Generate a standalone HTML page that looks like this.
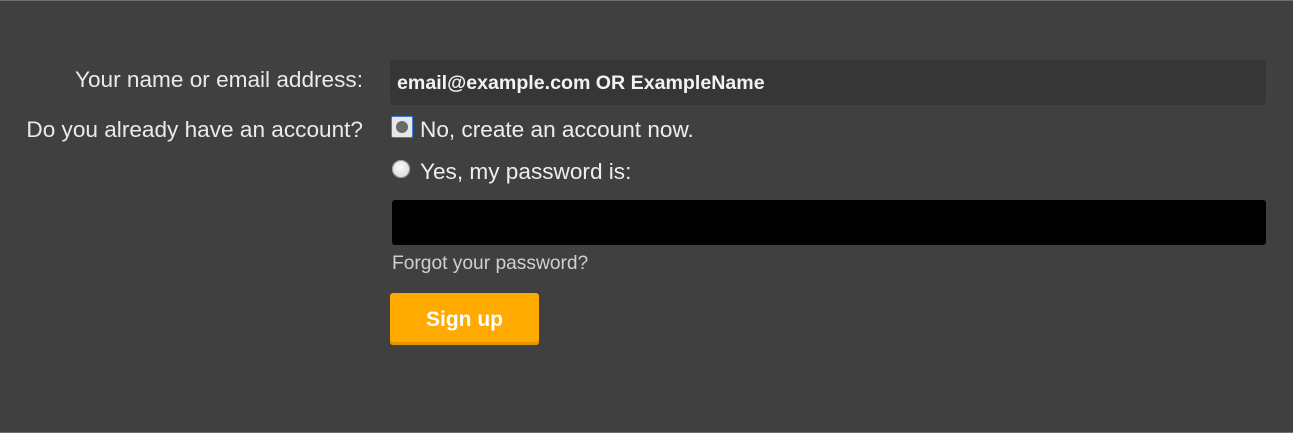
<!DOCTYPE html>
<html><head><style>
html,body{margin:0;padding:0}
body{width:1293px;height:433px;background:#404040;position:relative;overflow:hidden;font-family:"Liberation Sans",Arial,sans-serif;color:#eee}
.top{position:absolute;left:0;top:0;width:1293px;height:1px;background:#6e6e6e}
.bot{position:absolute;left:0;bottom:0;width:1293px;height:1px;background:#6e6e6e}
.lbl{position:absolute;right:930px;font-size:22.6px;color:#eaeaea;white-space:nowrap}
.in1{position:absolute;left:390px;top:60px;width:876px;height:45px;background:#363636;border-radius:3px;box-sizing:border-box;padding-left:7px;line-height:46px;font-weight:bold;font-size:19.6px;color:#f2f2f2}
.pw{position:absolute;left:392px;top:200px;width:874px;height:45px;background:#000;border-radius:3px}
.r{position:absolute;font-size:22.6px;color:#eee;white-space:nowrap}
.radio{position:absolute;width:18px;height:18px;border-radius:50%;background:radial-gradient(circle at 45% 40%,#fafafa,#cfcfcf);box-shadow:inset 0 0 0 1px #9a9a9a}
.sel{position:absolute;left:391px;top:116px;width:22px;height:22px;border:1px solid #3d7ce0;box-sizing:border-box;background:#e8e8e8;border-radius:2px}
.sel:after{content:"";position:absolute;left:4px;top:4px;width:12px;height:12px;border-radius:50%;background:#6a6a6a}
.fg{position:absolute;left:392px;top:253px;font-size:19.2px;color:#d0d0d0}
.btn{position:absolute;left:390px;top:293px;width:149px;height:52px;background:#ffaa00;border-radius:3px;box-shadow:inset 0 -3px 0 #e49600;color:#fff;font-weight:bold;font-size:21px;text-align:center;line-height:53px}
</style></head><body>
<div class="top"></div><div class="bot"></div>
<div class="lbl" style="top:67px">Your name or email address:</div>
<div class="lbl" style="top:117px">Do you already have an account?</div>
<div class="in1">email@example.com OR ExampleName</div>
<div class="sel"></div>
<div class="r" style="left:420px;top:117px">No, create an account now.</div>
<div class="radio" style="left:392px;top:160px"></div>
<div class="r" style="left:420px;top:159px">Yes, my password is:</div>
<div class="pw"></div>
<div class="fg">Forgot your password?</div>
<div class="btn">Sign up</div>
</body></html>
